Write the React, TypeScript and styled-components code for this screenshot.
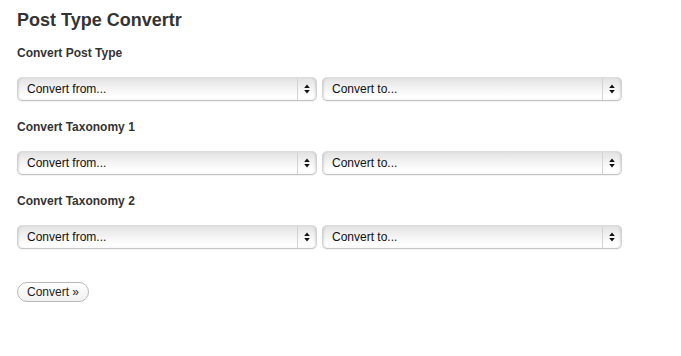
import * as React from "react"
import styled, { createGlobalStyle } from "styled-components"

const GlobalStyle = createGlobalStyle`
  html, body {
    margin: 0;
    padding: 0;
    background: #fff;
  }
  body {
    font-family: "Liberation Sans", Arial, sans-serif;
    color: #333;
  }
`

const Page = styled.div`
  padding: 8px 17px 40px;
`

const Title = styled.h2`
  margin: 0;
  font-size: 18px;
  line-height: 24px;
  font-weight: bold;
  color: #333;
`

const Section = styled.div<{ first?: boolean }>`
  margin-top: ${props => (props.first ? "13px" : "18px")};
`

const SectionTitle = styled.h3`
  margin: 0 0 16px;
  font-size: 12px;
  line-height: 16px;
  font-weight: bold;
  color: #333;
`

const SelectRow = styled.div`
  display: flex;
  gap: 5px;
`

const SelectBox = styled.div`
  display: flex;
  align-items: stretch;
  width: 300px;
  height: 24px;
  box-sizing: border-box;
  border: 1px solid #d2d2d2;
  border-top-color: #dcdcdc;
  border-bottom-color: #c4c4c4;
  border-radius: 5px;
  background: linear-gradient(#e2e2e2 0%, #f3f3f3 45%, #ffffff 85%, #fbfbfb 100%);
  box-shadow: inset 2px 0 2px -1px rgba(0, 0, 0, 0.12),
    inset -2px 0 2px -1px rgba(0, 0, 0, 0.12),
    0 1px 1px rgba(0, 0, 0, 0.06);
  cursor: default;
`

const SelectLabel = styled.span`
  flex: 1;
  padding-left: 9px;
  font-size: 12px;
  line-height: 22px;
  color: #111;
  white-space: nowrap;
`

const ArrowCell = styled.span`
  width: 18px;
  display: flex;
  align-items: center;
  justify-content: center;
  border-left: 1px solid #d4d4d4;
`

const Button = styled.button`
  margin-top: 33px;
  height: 20px;
  padding: 0 9px;
  border: 1px solid #b8b8b8;
  border-radius: 11px;
  background: linear-gradient(#ffffff, #f1f1f1);
  font-family: "Liberation Sans", Arial, sans-serif;
  font-size: 12px;
  line-height: 18px;
  color: #222;
  cursor: pointer;
`

const Arrows = () => (
  <svg width="6" height="10" viewBox="0 0 6 10">
    <path d="M3 0.5 L5.8 4 L0.2 4 Z M3 9.5 L5.8 6 L0.2 6 Z" fill="#111" />
  </svg>
)

const FakeSelect: React.FC<{ label: string }> = ({ label }) => (
  <SelectBox>
    <SelectLabel>{label}</SelectLabel>
    <ArrowCell>
      <Arrows />
    </ArrowCell>
  </SelectBox>
)

const sections = ["Convert Post Type", "Convert Taxonomy 1", "Convert Taxonomy 2"]

export default function App() {
  return (
    <>
      <GlobalStyle />
      <Page>
        <Title>Post Type Convertr</Title>
        {sections.map((name, i) => (
          <Section key={name} first={i === 0}>
            <SectionTitle>{name}</SectionTitle>
            <SelectRow>
              <FakeSelect label="Convert from..." />
              <FakeSelect label="Convert to..." />
            </SelectRow>
          </Section>
        ))}
        <Button type="button">Convert »</Button>
      </Page>
    </>
  )
}
